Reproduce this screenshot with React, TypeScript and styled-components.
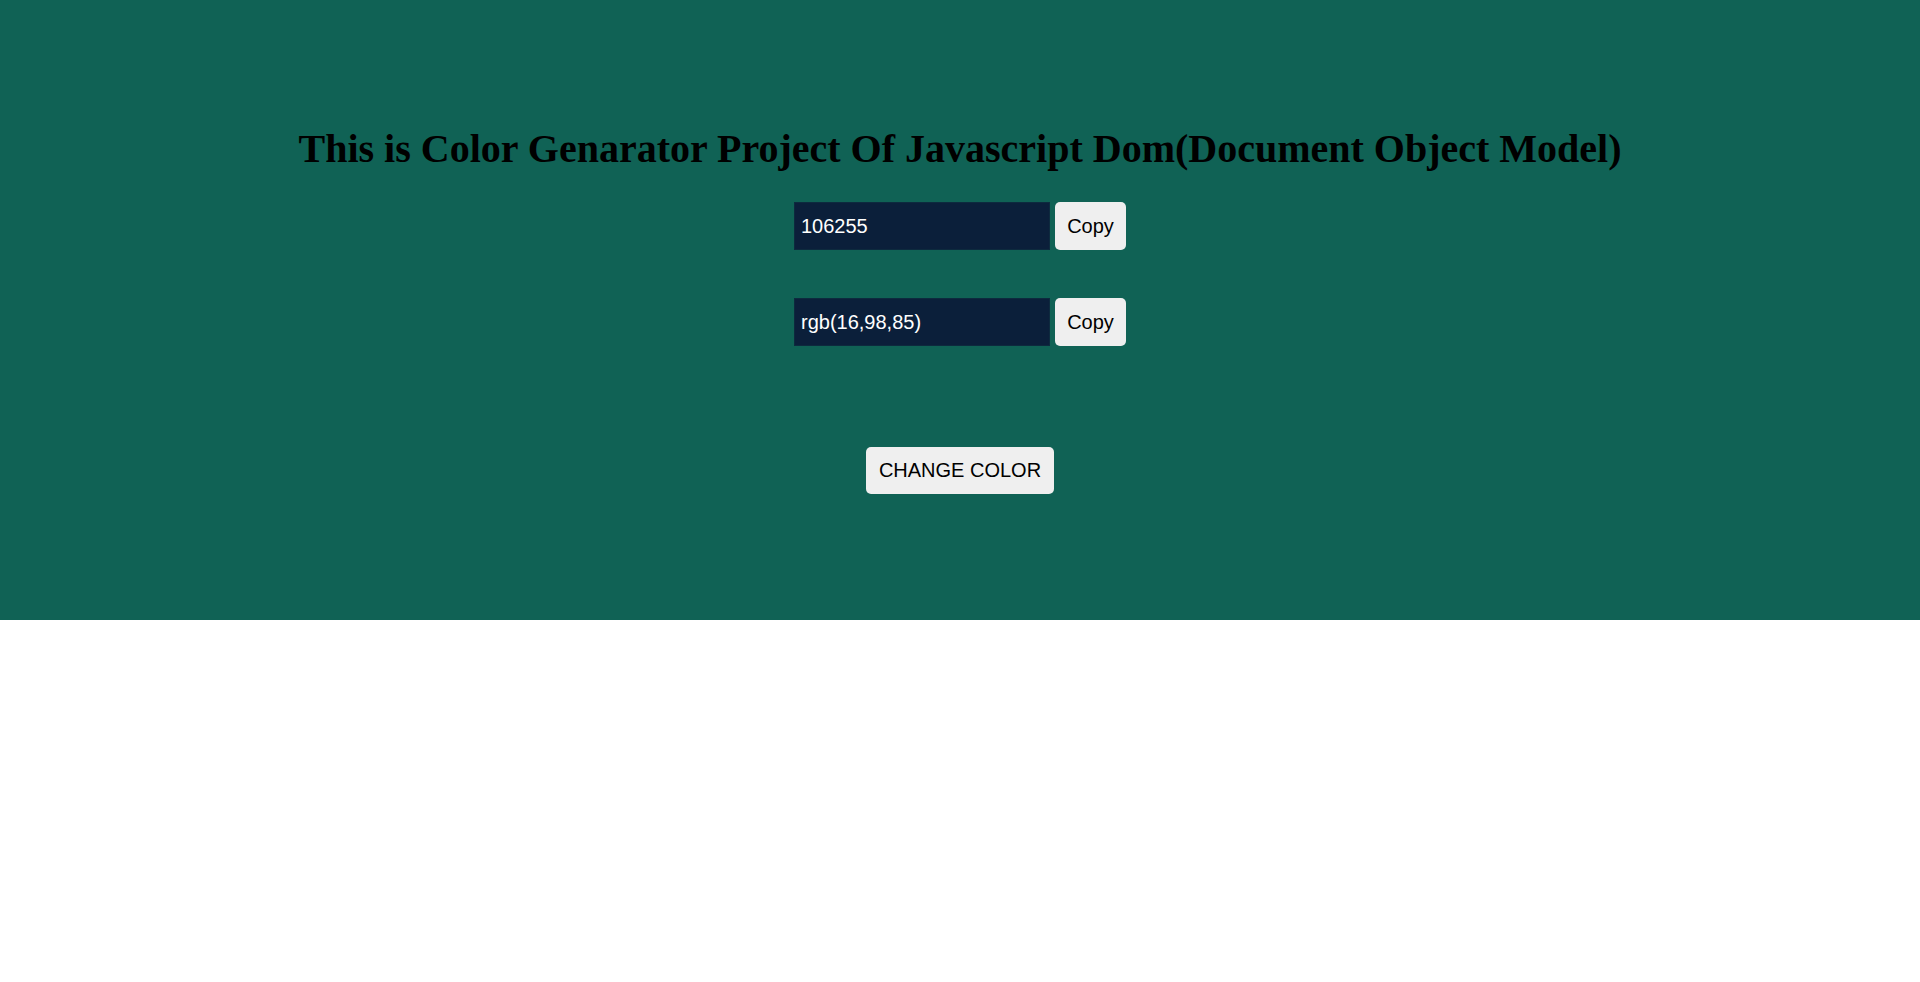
import React from "react";
import styled, { createGlobalStyle } from "styled-components";

const Global = createGlobalStyle`
  html, body { margin: 0; padding: 0; background: #ffffff; }
  * { box-sizing: border-box; }
`;

const Hero = styled.section`
  height: 620px;
  background: #106255;
  display: flex;
  flex-direction: column;
  align-items: center;
  padding-top: 126px;
`;

const Title = styled.h1`
  margin: 0;
  font-family: "Liberation Serif", "Times New Roman", serif;
  font-weight: bold;
  font-size: 40px;
  line-height: 46px;
  color: #000;
`;

const Field = styled.div<{ $top: number }>`
  display: flex;
  gap: 5px;
  margin-top: ${(p) => p.$top}px;
`;

const Value = styled.input`
  width: 256px;
  height: 48px;
  background: #0b1f3a;
  border: 1px solid #0d2a3e;
  color: #ffffff;
  font-family: "Liberation Sans", Arial, sans-serif;
  font-size: 20px;
  padding: 0 6px;
  outline: none;
`;

const Btn = styled.button<{ $w: number }>`
  width: ${(p) => p.$w}px;
  height: 48px;
  background: #efefef;
  border: none;
  border-radius: 5px;
  color: #000;
  font-family: "Liberation Sans", Arial, sans-serif;
  font-size: 20px;
  padding: 0;
  cursor: pointer;
`;

const Change = styled(Btn)`
  margin-top: 101px;
  height: 47px;
`;

export default function App() {
  return (
    <>
      <Global />
      <Hero>
        <Title>This is Color Genarator Project Of Javascript Dom(Document Object Model)</Title>
        <Field $top={30}>
          <Value readOnly value="106255" />
          <Btn $w={71}>Copy</Btn>
        </Field>
        <Field $top={48}>
          <Value readOnly value="rgb(16,98,85)" />
          <Btn $w={71}>Copy</Btn>
        </Field>
        <Change $w={188}>CHANGE COLOR</Change>
      </Hero>
    </>
  );
}
